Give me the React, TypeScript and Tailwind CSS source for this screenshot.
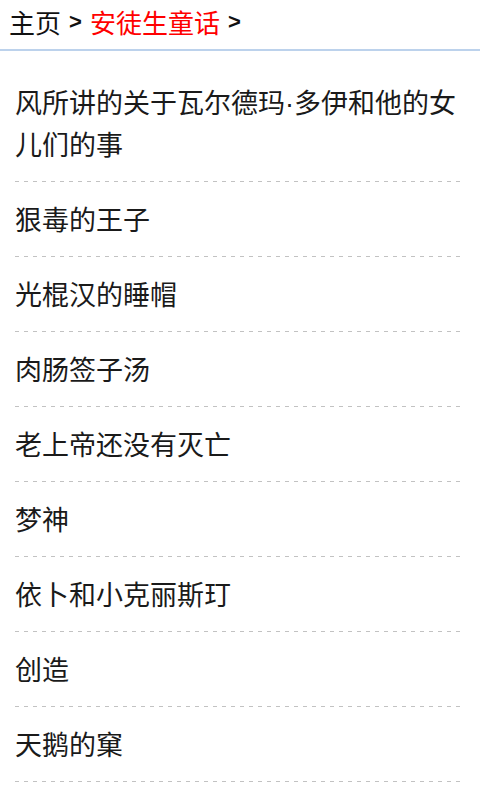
import React from "react";

const stories = [
  "风所讲的关于瓦尔德玛·多伊和他的女儿们的事",
  "狠毒的王子",
  "光棍汉的睡帽",
  "肉肠签子汤",
  "老上帝还没有灭亡",
  "梦神",
  "依卜和小克丽斯玎",
  "创造",
  "天鹅的窠",
];

export default function App() {
  return (
    <div
      className="min-h-[800px] bg-white text-[#111]"
      style={{ fontFamily: '"Noto Sans CJK SC", "Liberation Sans", sans-serif' }}
    >
      {/* breadcrumb */}
      <div className="h-[51px] border-b-2 border-[#bcd2ec] pl-[9px] pt-[6px] flex items-start text-[26px] leading-[32px]">
        <span className="text-[#111]">主页</span>
        <span className="mx-[8px] font-bold text-[22px] text-[#111]" style={{ fontFamily: '"Liberation Sans", sans-serif' }}>&gt;</span>
        <span className="text-[#ff0000]">安徒生童话</span>
        <span className="ml-[8px] font-bold text-[22px] text-[#111]" style={{ fontFamily: '"Liberation Sans", sans-serif' }}>&gt;</span>
      </div>

      {/* story list — Latin face first so the middle dot stays narrow */}
      <ul
        className="mt-[14px] px-[15px]"
        style={{ fontFamily: '"Liberation Sans", "Noto Sans CJK SC", sans-serif' }}
      >
        {stories.map((title) => (
          <li key={title} className="text-[27px] leading-[42px] text-[#1a1a1a]">
            <div className="pt-[18px] pb-[14px]">{title}</div>
            <div className="h-px bg-[repeating-linear-gradient(to_right,#c2c2c2_0_4px,transparent_4px_9px)]" />
          </li>
        ))}
      </ul>
    </div>
  );
}
